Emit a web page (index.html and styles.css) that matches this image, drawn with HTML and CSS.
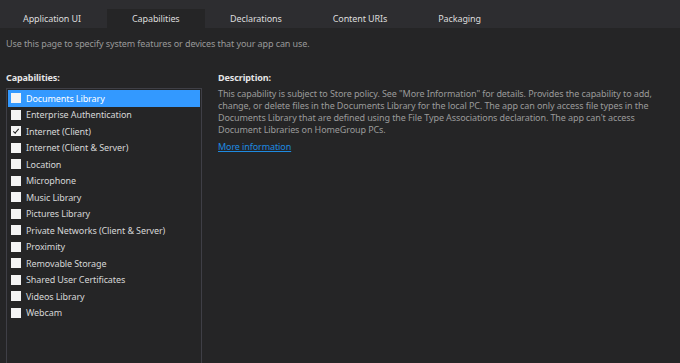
FILE: index.html
```html
<!doctype html>
<html lang="en">
  <head>
    <meta charset="UTF-8" />
    <title>Package.appxmanifest - Capabilities</title>
    <link rel="stylesheet" href="styles.css">
  </head>
  <body>
    <div class="tabs">
      <div class="tab">Application UI</div>
      <div class="tab active">Capabilities</div>
      <div class="tab">Declarations</div>
      <div class="tab">Content URIs</div>
      <div class="tab">Packaging</div>
    </div>

    <p class="intro">Use this page to specify system features or devices that your app can use.</p>

    <div class="editor">
      <div class="caps">
        <h3>Capabilities:</h3>
        <ul class="cap-list">
          <li class="selected"><span class="check"></span>Documents Library</li>
          <li><span class="check"></span>Enterprise Authentication</li>
          <li><span class="check checked"></span>Internet (Client)</li>
          <li><span class="check"></span>Internet (Client &amp; Server)</li>
          <li><span class="check"></span>Location</li>
          <li><span class="check"></span>Microphone</li>
          <li><span class="check"></span>Music Library</li>
          <li><span class="check"></span>Pictures Library</li>
          <li><span class="check"></span>Private Networks (Client &amp; Server)</li>
          <li><span class="check"></span>Proximity</li>
          <li><span class="check"></span>Removable Storage</li>
          <li><span class="check"></span>Shared User Certificates</li>
          <li><span class="check"></span>Videos Library</li>
          <li><span class="check"></span>Webcam</li>
        </ul>
      </div>

      <div class="desc">
        <h3>Description:</h3>
        <p>This capability is subject to Store policy. See "More Information" for details. Provides the capability to add, change, or delete files in the Documents Library for the local PC. The app can only access file types in the Documents Library that are defined using the File Type Associations declaration. The app can't access Document Libraries on HomeGroup PCs.</p>
        <a href="#" class="more">More information</a>
      </div>
    </div>
  </body>
</html>
```

FILE: styles.css
```css
body {
  margin: 0;
  background: #252526;
  color: #d0d0d0;
  font-family: "Noto Sans", "Open Sans", sans-serif;
  font-size: 9px;
  letter-spacing: -0.1px;
  height: 363px;
  overflow: hidden;
}
.tabs {
  display: flex;
  height: 28px;
  padding-top: 9px;
  box-sizing: border-box;
  background: #2d2d30;
}
.tab {
  padding: 0 25.5px;
  line-height: 19px;
  color: #dcdcdc;
}
.tab:first-child {
  padding: 0 26px 0 23px;
}
.tab.active {
  background: #252526;
  padding: 0 25px;
}
.intro {
  margin: 9px 6px 0;
  color: #999999;
  line-height: 13px;
}
.editor {
  display: flex;
  margin-top: 21px;
}
h3 {
  margin: 0 0 4px;
  font-size: 9px;
  font-weight: bold;
  color: #e6e6e6;
  line-height: 13px;
}
.caps {
  width: 196px;
  margin-left: 6px;
}
.cap-list {
  list-style: none;
  margin: 0;
  padding: 1px 1px 0;
  height: 300px;
  border: 1px solid #3f3f46;
}
.cap-list li {
  display: flex;
  align-items: center;
  height: 16.5px;
  color: #d6d6d6;
  white-space: nowrap;
}
.cap-list li.selected {
  background: #3399ff;
  color: #ffffff;
}
.check {
  width: 10px;
  height: 10px;
  margin: 0 5px 0 3px;
  background: #f4f4f4;
  display: flex;
  align-items: center;
  justify-content: center;
}
.check.checked::after {
  content: "";
  width: 5px;
  height: 2px;
  border: solid #1e1e1e;
  border-width: 0 0 1.5px 1.5px;
  transform: translate(0, -1px) rotate(-50deg);
}
.desc {
  margin-left: 16px;
  width: 455px;
}
.desc p {
  margin: 0;
  color: #9a9a9a;
  line-height: 12px;
}
.more {
  display: inline-block;
  margin-top: 4px;
  color: #1e8ae0;
  line-height: 13px;
}
```
